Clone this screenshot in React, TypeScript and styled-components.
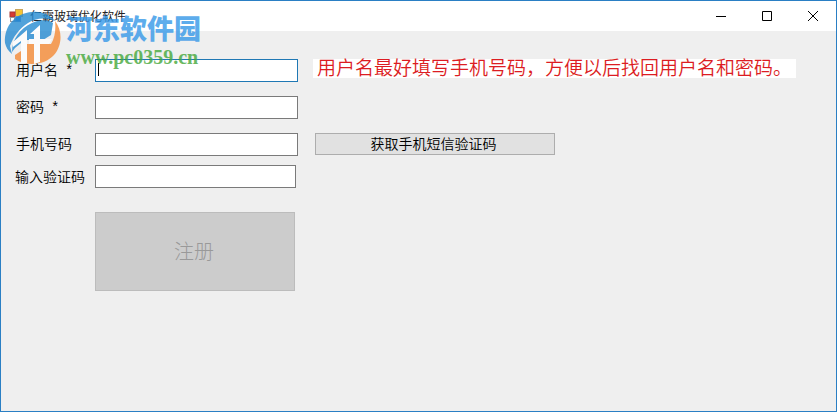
import React from "react";
import styled, { createGlobalStyle } from "styled-components";

const GlobalStyle = createGlobalStyle`
  * { box-sizing: border-box; }
  html, body, #root { height: 100%; }
  body {
    margin: 0;
    font-family: "Noto Sans CJK SC", sans-serif;
    font-size: 14px;
    color: #000;
  }
`;

const Window = styled.main`
  position: relative;
  display: flex;
  flex-direction: column;
  min-height: 100%;
  border: 1px solid #2a7fc4;
  background: #efefef;
`;

const TitleBar = styled.header`
  display: flex;
  align-items: center;
  height: 30px;
  padding-left: 8px;
  background: #fff;
`;

const Title = styled.h1`
  flex: 1;
  margin: 0 0 0 5px;
  font-size: 12px;
  font-weight: 400;
  line-height: 28px;
  color: #222;
`;

const CaptionButton = styled.button`
  display: grid;
  place-items: center;
  width: 46px;
  height: 28px;
  padding: 0;
  border: 0;
  background: transparent;
`;

const Form = styled.form`
  display: flex;
  flex-direction: column;
  align-items: flex-start;
  padding: 28px 14px 24px;
`;

const Row = styled.div<{ $gap: number }>`
  display: grid;
  grid-template-columns: 80px 203px auto;
  align-items: start;
  min-height: 23px;
  margin-bottom: ${(p) => p.$gap}px;
`;

const Label = styled.label<{ $outdent?: boolean }>`
  display: flex;
  gap: 7px;
  padding-left: ${(p) => (p.$outdent ? 0 : 1)}px;
  font-weight: 350;
  line-height: ${(p) => (p.$outdent ? 23 : 20)}px;
  white-space: nowrap;
`;

const RequiredMark = styled.span`
  font-family: "Liberation Mono", monospace;
  line-height: 24px;
  height: 20px;
`;

const Field = styled.div`
  position: relative;
  display: flex;
`;

const Input = styled.input<{ $active?: boolean; $narrow?: boolean }>`
  width: ${(p) => (p.$narrow ? 201 : 203)}px;
  height: 23px;
  padding: 0 4px;
  border: 1px solid ${(p) => (p.$active ? "#1f78b4" : "#7a7a7a")};
  border-radius: 0;
  outline: 0;
  background: #fff;
  font: inherit;
`;

const Caret = styled.span`
  position: absolute;
  left: 3px;
  top: 4px;
  width: 1px;
  height: 13px;
  background: #000;
`;

const Notice = styled.p`
  margin: 0 0 0 15px;
  padding: 0 4px 3px;
  background: #fff;
  color: #dc1c22;
  font-size: 19px;
  font-weight: 350;
  line-height: 16px;
  white-space: nowrap;
`;

const CodeButton = styled.button`
  width: 240px;
  height: 22px;
  margin-left: 17px;
  padding: 0 3px 2px 0;
  border: 1px solid #adadad;
  background: #e1e1e1;
  color: #000;
  font: inherit;
  font-weight: 350;
  line-height: 18px;
`;

const RegisterButton = styled.button`
  width: 200px;
  height: 79px;
  margin-left: 80px;
  padding: 0 2px 2px 0;
  border: 1px solid #bcbcbc;
  background: #ccc;
  color: #999;
  font: inherit;
  font-size: 20px;
  font-weight: 300;
`;

const Watermark = styled.div`
  position: absolute;
  left: 3px;
  top: 8px;
  display: flex;
  pointer-events: none;
  opacity: 0.8;
`;

const WatermarkText = styled.div`
  display: flex;
  flex-direction: column;
  margin: 3px 0 0 4px;
`;

const SiteName = styled.span`
  color: #3598e8;
  font-size: 27px;
  font-weight: 900;
  line-height: 31px;
`;

const SiteAddress = styled.span`
  padding-top: 3px;
  color: #45a83b;
  font-family: "Liberation Serif", serif;
  font-size: 20px;
  font-weight: 700;
  line-height: 22px;
`;

const AppIcon = () => (
  <svg width="16" height="16" viewBox="0 0 16 16" aria-hidden="true">
    <rect x="6.5" y="1.5" width="7" height="7" fill="#f3c332" stroke="#c9a55c" />
    <rect x="1" y="4" width="5" height="5" fill="#d83a32" stroke="#a83834" />
    <rect x="1.5" y="9.5" width="4" height="4" fill="#fff" stroke="#999" />
    <rect x="6.5" y="8.5" width="5" height="5" fill="#3c78c8" stroke="#6b91c8" />
  </svg>
);

const SiteLogo = () => (
  <svg width="58" height="58" viewBox="0 0 58 58" aria-hidden="true">
    <path d="M1 34C0 16 12 4 28 3C38 2 46 6 51 12C41 8 32 9 24 14C15 20 9 28 6 37L8 45C4 42 2 38 1 34Z" fill="#258bd2" />
    <path d="M8 43C8 31 16 19 28 14C37 10 45 11 49 14L47 26L39 31H23V29L11 39Z" fill="#258bd2" />
    <path d="M51 12C59 22 58 37 50 46C41 56 23 58 11 50V46L17 42V35H47C51 29 52 20 51 12Z" fill="#f58a35" />
    <path d="M9 33L23 21V54H17V32L9 38Z" fill="#fff" />
    <path d="M26 25L36 16V30H48L45 35H36V53L30 55V35H25V30H30V25Z" fill="#fff" />
  </svg>
);

const App: React.FC = () => (
  <>
    <GlobalStyle />
    <Window>
      <TitleBar>
        <AppIcon />
        <Title>仁霸玻璃优化软件</Title>
        <CaptionButton type="button" aria-label="最小化">
          <svg width="10" height="10"><path d="M0 5.5H10" stroke="#000" /></svg>
        </CaptionButton>
        <CaptionButton type="button" aria-label="最大化">
          <svg width="10" height="10"><path d="M.5 .5H9.5V9.5H.5Z" fill="none" stroke="#000" /></svg>
        </CaptionButton>
        <CaptionButton type="button" aria-label="关闭">
          <svg width="10" height="10"><path d="M0 0L10 10M10 0L0 10" stroke="#000" /></svg>
        </CaptionButton>
      </TitleBar>
      <Form onSubmit={(e) => e.preventDefault()}>
        <Row $gap={14}>
          <Label htmlFor="user">用户名<RequiredMark>*</RequiredMark></Label>
          <Field>
            <Input id="user" $active />
            <Caret />
          </Field>
          <Notice>用户名最好填写手机号码，方便以后找回用户名和密码。</Notice>
        </Row>
        <Row $gap={14}>
          <Label htmlFor="password">密码<RequiredMark>*</RequiredMark></Label>
          <Input id="password" type="password" />
        </Row>
        <Row $gap={9}>
          <Label htmlFor="phone">手机号码</Label>
          <Input id="phone" type="tel" />
          <CodeButton type="button">获取手机短信验证码</CodeButton>
        </Row>
        <Row $gap={24}>
          <Label htmlFor="code" $outdent>输入验证码</Label>
          <Input id="code" $narrow />
        </Row>
        <RegisterButton type="submit" disabled>注册</RegisterButton>
      </Form>
      <Watermark>
        <SiteLogo />
        <WatermarkText>
          <SiteName>河东软件园</SiteName>
          <SiteAddress>www.pc0359.cn</SiteAddress>
        </WatermarkText>
      </Watermark>
    </Window>
  </>
);

export default App;
